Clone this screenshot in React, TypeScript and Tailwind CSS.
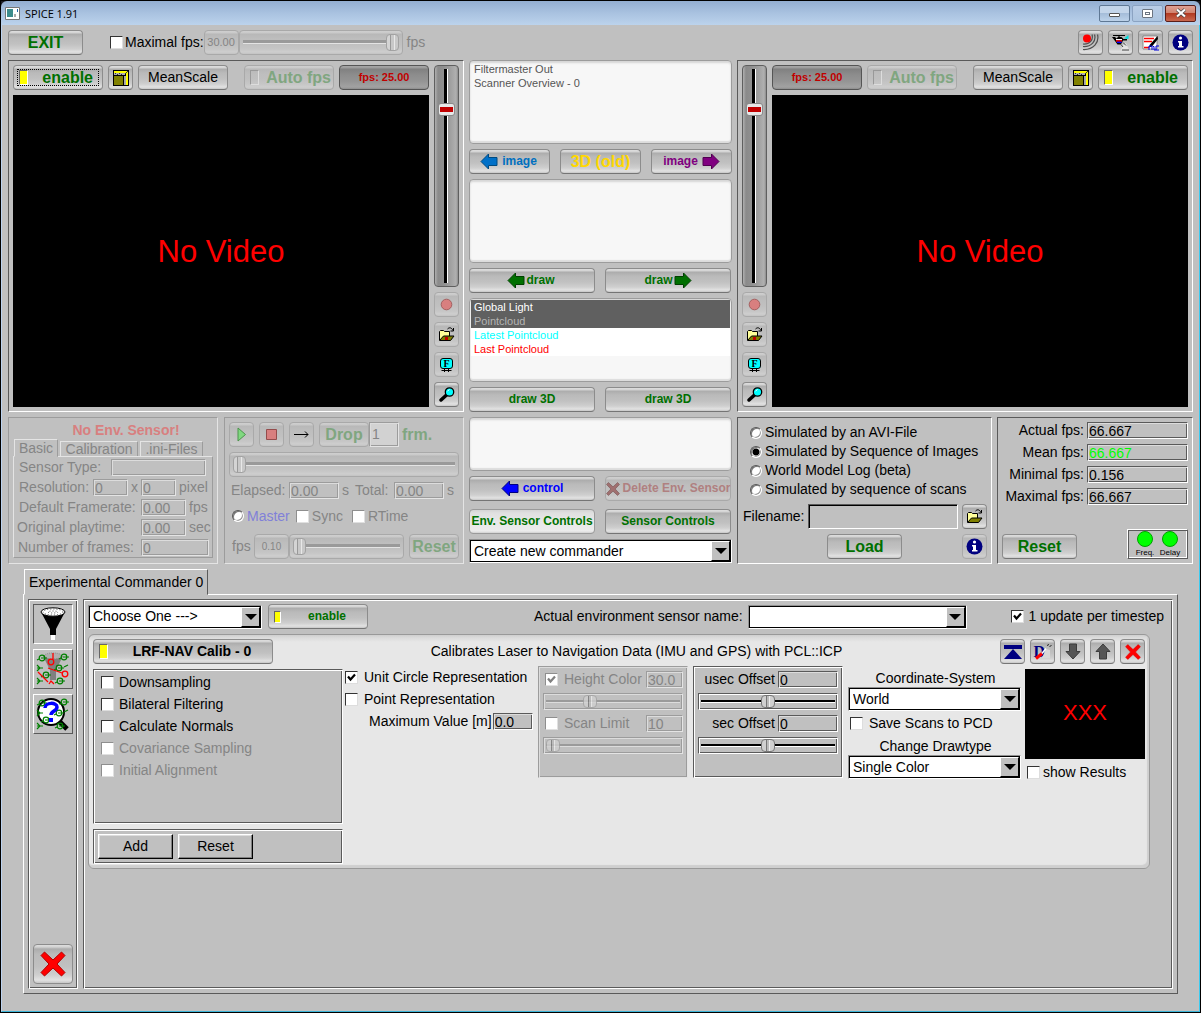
import React from "react";

const BTN =
  "flex items-center justify-center shrink-0 h-[25px] whitespace-nowrap rounded-[4px] border border-[#8c8c8c] border-b-[#757575] bg-[linear-gradient(180deg,#dedede_0px,#d2d2d2_2px,#acacac_3px,#bababa_7px,#c1c1c1_13px,#cfcfcf_18px,#e2e2e2_21px,#c6c6c6_100%)]";
const BTN_OFF =
  "flex items-center justify-center shrink-0 h-[25px] whitespace-nowrap rounded-[4px] border border-[#a9a9a9] bg-[linear-gradient(180deg,#cfcfcf_0px,#c9c9c9_2px,#b8b8b8_3px,#bebebe_8px,#c0c0c0_13px,#c6c6c6_18px,#cecece_21px,#c2c2c2_100%)]";
const BTN_DARK =
  "flex items-center justify-center shrink-0 h-[25px] rounded-[4px] border border-[#555] bg-[linear-gradient(180deg,#a6a6a6_0px,#9a9a9a_2px,#808080_3px,#8d8d8d_9px,#949494_15px,#a2a2a2_21px,#8c8c8c_100%)]";
const BTN_LIGHT =
  "flex items-center justify-center shrink-0 h-[25px] whitespace-nowrap rounded-[4px] border border-[#9a9a9a] bg-[linear-gradient(180deg,#d4d4d4_0px,#e0e0e0_3px,#e8e8e8_12px,#ececec_21px,#d0d0d0_100%)]";
const LIST =
  "rounded-[4px] border border-[#9c9c9c] bg-[#f7f7f7] shadow-[inset_0_2px_2px_#d6d6d6,inset_0_-2px_1px_#dcdcdc] pt-px px-px text-[11px] leading-[14px] text-[#555]";
const SUNK = "border border-t-[#5a5a5a] border-l-[#5a5a5a] border-b-white border-r-white";
const SUNK_OFF = "border border-t-[#9c9c9c] border-l-[#9c9c9c] border-b-[#e4e4e4] border-r-[#e4e4e4]";
const ENGRAVED =
  "border border-t-[#5a5a5a] border-l-[#5a5a5a] border-b-white border-r-white shadow-[inset_1px_1px_0_#fff,inset_-1px_-1px_0_#5a5a5a]";
const ENGRAVED_OFF =
  "border border-t-[#9c9c9c] border-l-[#9c9c9c] border-b-[#e4e4e4] border-r-[#e4e4e4] shadow-[inset_1px_1px_0_#dcdcdc,inset_-1px_-1px_0_#9c9c9c]";
const FIELD = "border border-t-[#5a5a5a] border-l-[#5a5a5a] border-b-white border-r-white shadow-[inset_1px_1px_0_#dcdcdc,inset_-1px_-1px_0_#5a5a5a]";

type Kids = { children?: React.ReactNode };

function Field({ id, value, w, off, green }: { id: string; value: string; w: string; off?: boolean; green?: boolean }) {
  return (
    <input
      id={id}
      aria-label={id}
      readOnly
      defaultValue={value}
      className={`h-[17px] min-w-0 bg-[#c0c0c0] pt-px pl-px text-[14px] leading-[14px] outline-none ${w} ${
        off ? ENGRAVED_OFF + " text-[#858585]" : FIELD
      } ${green ? "text-[#00ff00]" : ""}`}
    />
  );
}

function Check({ label, on, off, gap }: { label: string; on?: boolean; off?: boolean; gap?: string }) {
  return (
    <label className={`flex items-center whitespace-nowrap ${gap ?? "gap-[5px]"} ${off ? "text-[#858585]" : ""}`}>
      <span className="relative block size-[13px] shrink-0">
        <input
          type="checkbox"
          defaultChecked={on}
          disabled={off}
          className={`block size-[13px] appearance-none border bg-white ${
            off
              ? "border-t-[#8e8e8e] border-l-[#8e8e8e] border-b-[#e0e0e0] border-r-[#e0e0e0]"
              : "border-t-[#333] border-l-[#333] border-b-[#ddd] border-r-[#ddd]"
          }`}
        />
        {on && (
          <svg viewBox="0 0 13 13" className="pointer-events-none absolute inset-0 size-[13px]">
            <path d="M3 5.500L5.500 8.500L10 3.500" fill="none" stroke={off ? "#808080" : "#000"} strokeWidth="2.200" />
          </svg>
        )}
      </span>
      <span>{label}</span>
    </label>
  );
}

function Radio({ label, name, on, color }: { label: string; name: string; on?: boolean; color?: string }) {
  return (
    <label className={`flex h-[19px] items-center gap-[3px] whitespace-nowrap ${color ?? ""}`}>
      <input
        type="radio"
        name={name}
        defaultChecked={on}
        className="size-[12px] shrink-0 appearance-none rounded-full border border-t-[#555] border-l-[#555] border-b-white border-r-white bg-white shadow-[inset_1px_1px_0_#777,inset_-1px_-1px_0_#999] checked:bg-[radial-gradient(circle,#000_0_3px,#fff_4px)]"
      />
      <span>{label}</span>
    </label>
  );
}

function Combo({ label, options, w }: { label: string; options: string[]; w: string }) {
  return (
    <div className={`relative h-[24px] shrink-0 ${w}`}>
      <select
        aria-label={label}
        className="block h-full w-full appearance-none border border-t-[#909090] border-l-[#909090] border-b-white border-r-white bg-white pb-px pl-1 text-[14px] leading-[20px] shadow-[inset_0_0_0_1px_#000] outline-none"
      >
        {options.map((o) => (
          <option key={o}>{o}</option>
        ))}
      </select>
      <span className="pointer-events-none absolute top-[2px] right-[2px] bottom-[2px] flex w-[19px] items-center justify-center border border-t-white border-l-white border-b-black border-r-black bg-[#c0c0c0]">
        <svg width="12" height="6" viewBox="0 0 12 6">
          <path d="M0 0h12L6 6z" />
        </svg>
      </span>
    </div>
  );
}

function PlasticSlider({ label, value, w }: { label: string; value: number; w: string }) {
  return (
    <div className={`${BTN_OFF} min-w-0 px-[3px] ${w}`}>
      <input
        type="range"
        aria-label={label}
        defaultValue={value}
        className="h-[17px] w-full min-w-0 appearance-none bg-[linear-gradient(180deg,transparent_6px,#9a9a9a_6px_9px,#e4e4e4_9px_10px,transparent_10px)] [&::-webkit-slider-thumb]:h-[17px] [&::-webkit-slider-thumb]:w-[13px] [&::-webkit-slider-thumb]:appearance-none [&::-webkit-slider-thumb]:rounded-[4px] [&::-webkit-slider-thumb]:border [&::-webkit-slider-thumb]:border-[#a2a2a2] [&::-webkit-slider-thumb]:bg-[linear-gradient(90deg,#d4d4d4_3px,#999_3px_4px,#c8c8c8_4px_7px,#e8e8e8_7px_8px,#c8c8c8_8px)]"
      />
    </div>
  );
}

function ThinSlider({ label, value, off }: { label: string; value: number; off?: boolean }) {
  return (
    <div className={`flex h-[17px] items-center px-[2px] ${off ? ENGRAVED_OFF : ENGRAVED}`}>
      <input
        type="range"
        aria-label={label}
        defaultValue={value}
        className={`h-[13px] w-full min-w-0 appearance-none [&::-webkit-slider-thumb]:h-[13px] [&::-webkit-slider-thumb]:w-[14px] [&::-webkit-slider-thumb]:appearance-none [&::-webkit-slider-thumb]:rounded-[4px] [&::-webkit-slider-thumb]:border [&::-webkit-slider-thumb]:bg-[linear-gradient(90deg,#d0d0d0_4px,#777_4px_5px,#bbb_5px_7px,#eee_7px_8px,#d0d0d0_8px)] ${
          off
            ? "bg-[linear-gradient(180deg,transparent_5px,#9a9a9a_5px_7px,#dcdcdc_7px_8px,transparent_8px)] [&::-webkit-slider-thumb]:border-[#a2a2a2] [&::-webkit-slider-thumb]:opacity-80"
            : "bg-[linear-gradient(180deg,transparent_5px,#000_5px_7px,#fff_7px_8px,transparent_8px)] [&::-webkit-slider-thumb]:border-[#777]"
        }`}
      />
    </div>
  );
}

function TallSlider({ label }: { label: string }) {
  return (
    <div className="flex h-[222px] w-[25px] shrink-0 justify-center rounded-[4px] border border-[#5f5f5f] bg-[linear-gradient(90deg,#b0b0b0_0px,#8a8a8a_3px,#909090_9px,#a4a4a4_17px,#b0b0b0_21px,#8c8c8c_100%)] py-[3px]">
      <input
        type="range"
        aria-label={label}
        defaultValue={17}
        className="h-full w-[17px] appearance-none bg-[linear-gradient(90deg,transparent_6px,#000_6px_9px,#fff_9px_10px,transparent_10px)] [writing-mode:vertical-lr] [&::-webkit-slider-thumb]:h-[13px] [&::-webkit-slider-thumb]:w-[17px] [&::-webkit-slider-thumb]:appearance-none [&::-webkit-slider-thumb]:rounded-[3px] [&::-webkit-slider-thumb]:border [&::-webkit-slider-thumb]:border-[#8a8a8a] [&::-webkit-slider-thumb]:bg-[linear-gradient(90deg,#e8e8e8_1px,transparent_1px_14px,#e8e8e8_14px),linear-gradient(180deg,#e8e8e8_3px,#c00000_3px_8px,#e8e8e8_8px)]"
      />
    </div>
  );
}

function Led({ off }: { off?: boolean }) {
  return (
    <span
      className={`h-[15px] w-[9px] shrink-0 border ${
        off ? "border-t-[#999] border-l-[#999] border-b-[#ddd] border-r-[#ddd]" : "border-t-[#666] border-l-[#666] border-b-white border-r-white bg-[#ffff00]"
      }`}
    />
  );
}

function Arrow({ dir, fill, stroke }: { dir: "left" | "right"; fill: string; stroke: string }) {
  return (
    <svg width="18" height="17" viewBox="0 0 18 17" className="shrink-0">
      <path
        d={dir === "left" ? "M1 8.500L8.500 1v3.500h8.500v8H8.500V16z" : "M17 8.500L9.500 1v3.500H1v8h8.500V16z"}
        fill={fill}
        stroke={stroke}
      />
    </svg>
  );
}

function Cross({ size, fill, stroke }: { size: number; fill: string; stroke: string }) {
  return (
    <svg width={size} height={size} viewBox="0 0 26 26" className="shrink-0">
      <path d="M1 4.500L4.500 1 13 9l8.500-8L25 4.500 17 13l8 8.500-3.500 3.500-8.500-8-8.500 8L1 21.500 9 13z" fill={fill} stroke={stroke} strokeWidth="1" />
    </svg>
  );
}

function CubeIcon() {
  return (
    <svg width="16" height="16" viewBox="0 0 16 16" shapeRendering="crispEdges">
      <path d="M0 0h16v16H0z" fill="#000" />
      <path d="M1 1h13v2H1z" fill="#ffff00" />
      <path d="M13 2h2v13h-2z" fill="#ffff00" />
      <path d="M1 3h11v2H1z" fill="#b0b0b0" />
      <path d="M2 3h1v1H2zM4 4h1v1H4zM6 3h1v1H6zM8 4h1v1H8zM12 3h1v1h-1zM13 2h1v1h-1zM14 1h1v1h-1z" fill="#333" />
      <path d="M11 6h2v9h-2z" fill="#a8a8a8" />
      <path d="M10 6h1v9h-1z" fill="#000" />
      <path d="M1 6h9v9H1z" fill="#808000" />
    </svg>
  );
}

function FolderIcon({ dot }: { dot?: boolean }) {
  return (
    <svg width="17" height="15" viewBox="0 0 17 15">
      <path d="M1.500 13V4.500l1-1h3l1 1h5v5" fill="#ffff99" stroke="#000" />
      <path d="M1.500 13.500l4-4.500h10.500l-3.500 4.500z" fill="#808000" stroke="#000" />
      <path d="M9.500 2c2-2 4-1.500 5.500 1.500M15.500 1v3h-3" fill="none" stroke="#000" />
      {dot && <path d="M7 10h3v3H7z" fill="#c00000" />}
    </svg>
  );
}

function ScreenIcon() {
  return (
    <svg width="13" height="14" viewBox="0 0 13 14">
      <rect x="0.500" y="0.500" width="12" height="10" rx="2.500" fill="#00ffff" stroke="#000" />
      <text x="6.500" y="9" textAnchor="middle" fontFamily="Liberation Serif" fontWeight="bold" fontSize="10">
        F
      </text>
      <path d="M1.500 12.500h10M4.500 11v3M8.500 11v3" stroke="#000" />
    </svg>
  );
}

function LensIcon() {
  return (
    <svg width="16" height="15" viewBox="0 0 16 15">
      <path d="M2 13L7.500 8" stroke="#000" strokeWidth="3.500" strokeLinecap="round" />
      <circle cx="10.500" cy="5" r="4.200" fill="#00ffff" stroke="#000" strokeWidth="1.300" />
      <path d="M8.500 4l2-1.500" stroke="#fff" />
    </svg>
  );
}

function InfoIcon() {
  return (
    <svg width="17" height="17" viewBox="0 0 17 17">
      <circle cx="8.500" cy="8.500" r="8" fill="#000080" />
      <circle cx="8.500" cy="4" r="1.600" fill="#fff" />
      <path d="M6 7h4v5h1.500v1.500H6V12h1V8.500H6z" fill="#fff" />
    </svg>
  );
}

function RadarIcon() {
  return (
    <svg width="17" height="17" viewBox="0 0 17 17">
      <path d="M10 0.500c1.500 5-2 10-9 9.500M12.500 0.500c2 6.500-3 12.500-11.500 12M15.500 0.500c2 8-4 15.500-14.500 15" fill="none" stroke="#505050" strokeWidth="1.200" />
      <circle cx="5" cy="4.500" r="4" fill="#ff0000" />
    </svg>
  );
}

function HeliIcon() {
  return (
    <svg width="17" height="17" viewBox="0 0 17 17">
      <path d="M11 11l3-2 3 7H9z" fill="#e4e4e4" />
      <path d="M1 1.500h12M7 1.500V4" stroke="#000" strokeWidth="1.200" />
      <path d="M0 3h3l1.500 1.500L6 3h3.500l2 2H15v1.500h-4L9 10.500H5.500L3 7z" fill="#000" />
      <path d="M4 5h6v1.200H4z" fill="#fff" />
      <path d="M4 6.200h6v1.500H4z" fill="#ff0000" />
      <path d="M5 7.700h4.500v1.300H5z" fill="#0000ff" />
      <path d="M12 4.500l4.500-3.500v4z" fill="#00e0e0" />
      <path d="M9 10.500l2 2.500M11 8.500l3 3M10 16h7" stroke="#444" />
    </svg>
  );
}

function NoteIcon() {
  return (
    <svg width="17" height="16" viewBox="0 0 17 16">
      <path d="M1 1h14v13H1z" fill="#fff" stroke="#777" strokeWidth="0.800" />
      <path d="M2 3.500h10M2 6.500h8M2 12.500h5" stroke="#ff0000" strokeWidth="1.400" />
      <path d="M15.500 1L8 9.500l-1 3 3-1L16 4z" fill="#000" />
      <path d="M7 15v-4h3v4M11 11.500h1v3.500h2v-4h3M14 15h3" fill="none" stroke="#0000e0" />
    </svg>
  );
}

function DebugIcon() {
  return (
    <span className="relative flex h-[19px] w-[18px] items-center pb-px font-['Liberation_Serif',serif] text-[16px] leading-[19px] font-bold text-[#000080]">
      D
      <svg width="18" height="17" viewBox="0 0 18 17" className="absolute top-px left-0">
        <path d="M12 6l4 1v8h-8z" fill="#d8d8d8" />
        <path d="M2 15.500l6-5" stroke="#ff0000" strokeWidth="3" />
        <path d="M8 10.500l4-5" stroke="#fff" strokeWidth="1.500" />
        <path d="M13.500 3l1-2M15.500 4l2-2" stroke="#222" />
      </svg>
    </span>
  );
}

function TopIcon() {
  return (
    <svg width="18" height="14" viewBox="0 0 18 14">
      <path d="M0 0h18v4H0zM9 4L18 14H0z" fill="#000080" />
    </svg>
  );
}

function BlockArrow({ up }: { up?: boolean }) {
  return (
    <svg width="16" height="17" viewBox="0 0 16 17">
      <path d={up ? "M8 1l7 7.500h-3.500V16h-7V8.500H1z" : "M8 16L1 8.500h3.500V1h7v7.500H15z"} fill="#555" stroke="#3c3c3c" />
    </svg>
  );
}

function FunnelIcon() {
  return (
    <svg width="26" height="34" viewBox="0 0 26 34">
      <path d="M1 5l9 17v6h6v-6l9-17z" fill="#000" />
      <ellipse cx="13" cy="5" rx="12" ry="4.200" fill="#fff" stroke="#000" />
      <ellipse cx="13" cy="5" rx="10" ry="3" fill="none" stroke="#555" strokeDasharray="1 2" />
      <ellipse cx="13" cy="5" rx="5" ry="1" fill="none" stroke="#555" strokeDasharray="1 2" />
      <path d="M11 28h4v5h-4z" fill="#fff" />
    </svg>
  );
}

const nodes: [number, number][] = [[6, 6], [28, 5], [23, 16], [10, 23], [24, 29]];

function Circuit() {
  return (
    <g fill="none" stroke="#008000" strokeWidth="1.200">
      {nodes.map(([x, y]) => (
        <g key={`${x}-${y}`}>
          <circle cx={x} cy={y} r="2.800" />
          <path d={`M${x - 1} ${y}h6M${x - 5} ${y + 2}l2-1`} />
        </g>
      ))}
      <path d="M1 13l3 3-3 3M1 16h6M1 26l3 3-3 3M1 29h6M28 15l4-2" />
    </g>
  );
}

function GraphIcon() {
  return (
    <svg width="34" height="34" viewBox="0 0 34 34">
      <path d="M7 4h20l-7 14v10h-6V18z" fill="#808080" />
      <ellipse cx="17" cy="4" rx="9" ry="3" fill="#b0b0b0" stroke="#888" strokeDasharray="1 1" />
      <Circuit />
      <g fill="none" stroke="#ff0000" strokeWidth="1.300">
        <circle cx="15" cy="10" r="2.800" />
        <circle cx="29" cy="22" r="2.800" />
        <path d="M17 1v6M12 16l14 5M2 20l10 10M13 32l2-3 3 3" />
      </g>
    </svg>
  );
}

function QueryIcon() {
  return (
    <svg width="34" height="34" viewBox="0 0 34 34">
      <path d="M22 23l9 9" stroke="#000" strokeWidth="5" />
      <circle cx="15" cy="15" r="13" fill="#fff" stroke="#000" strokeWidth="2" />
      <Circuit />
      <path d="M9 11c0-6 12-6 12-1 0 4-6 4-6 8" fill="none" stroke="#0000ff" strokeWidth="3.500" />
      <path d="M13 21h4v4h-4z" fill="#0000ff" />
    </svg>
  );
}

function IconButton({ label, off, children }: Kids & { label: string; off?: boolean }) {
  return (
    <button aria-label={label} className={`${off ? BTN_OFF : BTN} w-[25px]`}>
      {children}
    </button>
  );
}

function VideoPanel({ side }: { side: "left" | "right" }) {
  const enable = (
    <button key="en" className={`${BTN} w-[90px] pr-[9px] pl-[5px] text-[16px] font-bold text-[#007000]`}>
      <Led />
      <span className="flex-1 text-right">enable</span>
    </button>
  );
  const focused = (
    <button key="en" className={`${BTN} w-[90px] p-[3px] text-[16px] font-bold text-[#007000]`}>
      <span className="flex h-[17px] w-full items-center justify-between border border-dotted border-black pr-[5px] pl-px">
        <Led />
        enable
      </span>
    </button>
  );
  const cube = (
    <IconButton key="cube" label="Bounding box">
      <CubeIcon />
    </IconButton>
  );
  const mean = (
    <button key="mean" className={`${BTN} w-[90px] text-[14px]`}>
      MeanScale
    </button>
  );
  const auto = (
    <button key="auto" className={`${BTN_OFF} w-[90px] pr-[2px] pl-[5px] text-[16px] font-bold text-[#80a680]`}>
      <Led off />
      <span className="flex-1 text-right">Auto fps</span>
    </button>
  );
  const fps = (
    <output key="fps" className={`${BTN_DARK} w-[90px] text-[11px] font-bold text-[#c00000]`}>
      fps: 25.00
    </output>
  );
  const gap = <span key="gap" className="flex-1" />;
  const video = (
    <div key="v" className="flex min-w-0 flex-1 flex-col gap-[5px]">
      <div className="flex gap-[5px]">
        {side === "left" ? [focused, cube, mean, gap, auto, fps] : [fps, auto, gap, mean, cube, enable]}
      </div>
      <div className="flex flex-1 items-center justify-center bg-black text-[31px] text-[#ff0000]">No Video</div>
    </div>
  );
  const tools = (
    <div key="t" className="flex flex-col gap-[5px]">
      <TallSlider label={`${side} scale`} />
      <IconButton label="Record" off>
        <svg width="13" height="13" viewBox="0 0 13 13">
          <circle cx="6.500" cy="6.500" r="5.300" fill="#d87f7f" stroke="#a46060" />
        </svg>
      </IconButton>
      <IconButton label="Open" off>
        <FolderIcon dot />
      </IconButton>
      <IconButton label="Fullscreen" off>
        <ScreenIcon />
      </IconButton>
      <IconButton label="Zoom">
        <LensIcon />
      </IconButton>
    </div>
  );
  return <section className={`flex gap-[5px] p-1 ${SUNK}`}>{side === "left" ? [video, tools] : [tools, video]}</section>;
}

function EnvSensor() {
  return (
    <section className={`w-[210px] shrink-0 px-1 pt-[3px] text-[#858585] ${SUNK_OFF}`}>
      <h2 className="pl-[26px] text-center text-[14px] leading-[18px] font-bold text-[#d87f7f]">No Env. Sensor!</h2>
      <div className="flex items-end gap-[2px] pl-px" role="tablist">
        <button role="tab" className="relative -mb-px h-[18px] w-[44px] border border-t-[#e4e4e4] border-r-[#9c9c9c] border-b-[#c0c0c0] border-l-[#e4e4e4] bg-[#c0c0c0] leading-[16px]">
          Basic
        </button>
        <button role="tab" className="h-[15px] w-[78px] border border-t-[#e4e4e4] border-r-[#9c9c9c] border-b-0 border-l-[#e4e4e4] leading-[15px]">
          Calibration
        </button>
        <button role="tab" className="h-[15px] w-[63px] border border-t-[#e4e4e4] border-r-[#9c9c9c] border-b-0 border-l-[#e4e4e4] leading-[15px]">
          .ini-Files
        </button>
      </div>
      <div className="border border-t-[#e4e4e4] border-l-[#e4e4e4] border-b-[#9c9c9c] border-r-[#9c9c9c] pl-[5px] whitespace-nowrap">
        <div className="flex h-5 items-center gap-[3px]">
          <span className="w-[89px]">Sensor Type:</span>
          <Field id="Sensor Type" value="" w="w-[95px]" off />
        </div>
        <div className="flex h-5 items-center gap-[3px]">
          <span className="w-[71px]">Resolution:</span>
          <Field id="Resolution width" value="0" w="w-[35px]" off />
          x
          <Field id="Resolution height" value="0" w="w-[35px]" off />
          pixel
        </div>
        <div className="flex h-5 items-center gap-[3px]">
          <span className="w-[119px]">Default Framerate:</span>
          <Field id="Default Framerate" value="0.00" w="w-[45px]" off />
          fps
        </div>
        <div className="-ml-[2px] flex h-5 items-center gap-[3px]">
          <span className="w-[121px]">Original playtime:</span>
          <Field id="Original playtime" value="0.00" w="w-[45px]" off />
          sec
        </div>
        <div className="-ml-px flex h-5 items-center gap-[3px]">
          <span className="w-[120px]">Number of frames:</span>
          <Field id="Number of frames" value="0" w="w-[68px]" off />
        </div>
      </div>
    </section>
  );
}

function Playback() {
  return (
    <section className={`flex min-w-0 flex-1 flex-col p-1 whitespace-nowrap text-[#858585] ${SUNK_OFF}`}>
      <div className="flex items-center">
        <div className="mr-[5px] flex gap-[5px]">
          <IconButton label="Play" off>
            <svg width="10" height="15" viewBox="0 0 10 15">
              <path d="M1 1l7.500 6.500L1 14z" fill="#80d880" stroke="#4c944c" />
            </svg>
          </IconButton>
          <IconButton label="Stop" off>
            <svg width="11" height="11" viewBox="0 0 11 11">
              <path d="M0.500 0.500h10v10h-10z" fill="#d87f7f" stroke="#944c4c" />
            </svg>
          </IconButton>
          <IconButton label="Step" off>
            <svg width="15" height="7" viewBox="0 0 15 7">
              <path d="M0 3.500h14M11 0.500l3 3-3 3" fill="none" stroke="#000" />
            </svg>
          </IconButton>
        </div>
        <button className={`${BTN_OFF} w-[50px] text-[16px] font-bold text-[#80a680]`}>Drop</button>
        <input aria-label="Drop frames" readOnly defaultValue="1" className={`h-[25px] w-[30px] bg-[#d2d2d2] pb-[2px] pl-[2px] ${ENGRAVED_OFF}`} />
        <span className="ml-[3px] text-[16px] font-bold text-[#80a680]">frm.</span>
      </div>
      <div className="mt-[5px] flex">
        <PlasticSlider label="Position" value={0} w="w-full" />
      </div>
      <div className="mt-[5px] flex h-[17px] items-center gap-[3px] pl-[2px]">
        <span className="w-[55px]">Elapsed:</span>
        <Field id="Elapsed" value="0.00" w="w-[50px]" off />
        <span className="w-[10px]">s</span>
        <span className="w-[36px]">Total:</span>
        <Field id="Total" value="0.00" w="w-[50px]" off />s
      </div>
      <div className="mt-[7px] flex h-5 items-center gap-[6px] pl-[3px]">
        <Radio name="clock" label="Master" color="text-[#8080d8]" />
        <div className="mr-[3px]">
          <Check label="Sync" off gap="gap-[3px]" />
        </div>
        <Check label="RTime" off gap="gap-[3px]" />
      </div>
      <div className="mt-2 flex items-center">
        <span className="w-[25px] pl-[3px]">fps</span>
        <output className={`${BTN_OFF} w-[35px] text-[10px]`}>0.10</output>
        <PlasticSlider label="Playback rate" value={0} w="flex-1 !shrink" />
        <button className={`${BTN_OFF} ml-[5px] w-[50px] text-[16px] font-bold text-[#80a680]`}>Reset</button>
      </div>
    </section>
  );
}

function CenterColumn() {
  const wide = `${BTN} text-[12px] font-bold text-[#007000]`;
  return (
    <section className="flex w-[263px] shrink-0 flex-col gap-[5px]">
      <ul className={`h-[84px] ${LIST}`}>
        <li className="px-[3px]">Filtermaster Out</li>
        <li className="px-[3px]">Scanner Overview - 0</li>
      </ul>
      <div className="grid grid-cols-3 gap-[10px]">
        <button className={`${BTN} gap-1 pr-[2px] text-[12px] font-bold text-[#0070c0]`}>
          <Arrow dir="left" fill="#0070c8" stroke="#004a80" />
          image
        </button>
        <button className={`${BTN} text-[16px] font-bold text-[#ffd700]`}>3D (old)</button>
        <button className={`${BTN} gap-1 text-[12px] font-bold text-[#800080]`}>
          image
          <Arrow dir="right" fill="#800080" stroke="#500050" />
        </button>
      </div>
      <ul className={`h-[84px] ${LIST}`} />
      <div className="grid grid-cols-2 gap-[10px] pr-px">
        <button className={`${wide} gap-px pr-[2px]`}>
          <Arrow dir="left" fill="#007000" stroke="#004000" />
          draw
        </button>
        <button className={`${wide} gap-px`}>
          draw
          <Arrow dir="right" fill="#007000" stroke="#004000" />
        </button>
      </div>
      <ul className={`h-[84px] ${LIST}`}>
        <li className="bg-[#606060] px-[3px] text-white">Global Light</li>
        <li className="bg-[#606060] px-[3px] text-[#b4b4b4]">Pointcloud</li>
        <li className="bg-white px-[3px] text-[#00ffff]">Latest Pointcloud</li>
        <li className="bg-white px-[3px] text-[#ff0000]">Last Pointcloud</li>
      </ul>
      <div className="grid grid-cols-2 gap-[10px] pr-px">
        <button className={wide}>draw 3D</button>
        <button className={wide}>draw 3D</button>
      </div>
      <ul className={`h-[54px] ${LIST}`} />
      <div className="grid grid-cols-2 gap-[10px] pr-px">
        <button className={`${BTN} gap-1 text-[12px] font-bold text-[#0000ff]`}>
          <Arrow dir="left" fill="#0000ff" stroke="#000080" />
          control
        </button>
        <button className={`${BTN_OFF} gap-[3px] text-[12px] font-bold text-[#b08080]`}>
          <Cross size={14} fill="#a07070" stroke="#704c4c" />
          Delete Env. Sensor
        </button>
      </div>
      <div className="mt-[3px] grid grid-cols-2 gap-[10px] pr-px">
        <button className={`${BTN_LIGHT} text-[12px] font-bold text-[#007000]`}>Env. Sensor Controls</button>
        <button className={wide}>Sensor Controls</button>
      </div>
      <Combo label="Commander" options={["Create new commander"]} w="w-full" />
    </section>
  );
}

function Simulation() {
  return (
    <section className={`flex min-w-0 flex-1 flex-col p-1 whitespace-nowrap ${SUNK}`}>
      <div className="pt-px pl-[8px]">
        <Radio name="sim" label="Simulated by an AVI-File" />
        <Radio name="sim" label="Simulated by Sequence of Images" on />
        <Radio name="sim" label="World Model Log (beta)" />
        <Radio name="sim" label="Simulated by sequence of scans" />
      </div>
      <div className="mt-[5px] flex items-center gap-1 pl-px">
        <label htmlFor="filename">Filename:</label>
        <input
          id="filename"
          className="h-[25px] min-w-0 flex-1 border border-t-[#5a5a5a] border-l-[#5a5a5a] border-b-white border-r-white bg-[#c0c0c0] px-1 shadow-[inset_1px_1px_0_#000]"
        />
        <IconButton label="Browse">
          <FolderIcon />
        </IconButton>
      </div>
      <div className="mt-[5px] flex justify-between pl-[85px]">
        <button className={`${BTN} w-[75px] text-[16px] font-bold text-[#007000]`}>Load</button>
        <IconButton label="About file" off>
          <InfoIcon />
        </IconButton>
      </div>
    </section>
  );
}

function Stats() {
  const rows = [
    ["Actual fps:", "66.667"],
    ["Mean fps:", "66.667"],
    ["Minimal fps:", "0.156"],
    ["Maximal fps:", "66.667"],
  ];
  return (
    <section className={`flex w-[196px] shrink-0 flex-col justify-between p-1 whitespace-nowrap ${SUNK}`}>
      <div className="flex flex-col gap-[5px]">
        {rows.map(([k, v]) => (
          <div key={k} className="flex h-[17px] items-center justify-end gap-[3px]">
            <label htmlFor={k}>{k}</label>
            <Field id={k} value={v} w="w-[101px]" green={k === "Mean fps:"} />
          </div>
        ))}
      </div>
      <div className="flex items-end justify-between">
        <button className={`${BTN} w-[75px] text-[16px] font-bold text-[#007000]`}>Reset</button>
        <div className="flex gap-[5px] border border-t-white border-l-white border-b-[#5a5a5a] border-r-[#5a5a5a] px-[7px] pt-px text-[8px] leading-[9px] shadow-[inset_1px_1px_0_#5a5a5a,inset_-1px_-1px_0_#fff]">
          {["Freq.", "Delay"].map((t) => (
            <div key={t} className="flex h-[27px] w-5 flex-col items-center gap-px">
              <span className="size-[16px] shrink-0 rounded-full border border-[#00a000] bg-[#00ff00]" />
              {t}
            </div>
          ))}
        </div>
      </div>
    </section>
  );
}

function CalibCard() {
  return (
    <article className="mt-[5px] mr-[18px] rounded-[6px] border border-[#999] bg-[linear-gradient(180deg,#cfcfcf_0px,#dcdcdc_3px,#e7e7e7_7px,#e7e7e7_100%)] p-1 shadow-[inset_-2px_-3px_1px_#cfcfcf]">
      <header className="flex items-center gap-[5px]">
        <button className={`${BTN} w-[180px] pr-[15px] pl-[5px] text-[14px] font-bold`}>
          <Led />
          <span className="flex-1 pl-[19px]">LRF-NAV Calib - 0</span>
        </button>
        <p className="flex-1 text-center">Calibrates Laser to Navigation Data (IMU and GPS) with PCL::ICP</p>
        <IconButton label="To top">
          <TopIcon />
        </IconButton>
        <IconButton label="Draw settings">
          <DebugIcon />
        </IconButton>
        <IconButton label="Move down">
          <BlockArrow />
        </IconButton>
        <IconButton label="Move up">
          <BlockArrow up />
        </IconButton>
        <IconButton label="Remove">
          <Cross size={16} fill="#ff0000" stroke="#e00000" />
        </IconButton>
      </header>
      <div className="mt-[2px] flex items-start whitespace-nowrap">
        <div className="mt-[3px] flex w-[250px] shrink-0 flex-col gap-[5px]">
          <div className={`flex h-[155px] flex-col bg-[#c0c0c0] pt-px pl-[7px] ${ENGRAVED}`}>
            {["Downsampling", "Bilateral Filtering", "Calculate Normals", "Covariance Sampling", "Initial Alignment"].map((t, i) => (
              <div key={t} className="flex h-[22px] items-center">
                <Check label={t} off={i > 2} />
              </div>
            ))}
          </div>
          <div className={`flex gap-[5px] bg-[#c0c0c0] p-1 ${ENGRAVED}`}>
            {["Add", "Reset"].map((t) => (
              <button
                key={t}
                className="h-[25px] w-[75px] border border-t-white border-l-white border-b-black border-r-black shadow-[inset_-1px_-1px_0_#808080,inset_1px_1px_0_#dcdcdc]"
              >
                {t}
              </button>
            ))}
          </div>
        </div>
        <div className="ml-[2px] min-w-0 flex-1">
          <div className="flex h-[22px] items-center">
            <Check label="Unit Circle Representation" on gap="gap-[6px]" />
          </div>
          <div className="flex h-[22px] items-center">
            <Check label="Point Representation" gap="gap-[6px]" />
          </div>
          <div className="flex h-[22px] items-center gap-px pl-6">
            <label htmlFor="Maximum Value">Maximum Value [m]</label>
            <Field id="Maximum Value" value="0.0" w="w-[40px]" />
          </div>
        </div>
        <div className={`flex h-[112px] w-[150px] shrink-0 flex-col gap-[5px] bg-[#c0c0c0] p-1 ${ENGRAVED_OFF}`}>
          <div className="flex h-[17px] items-center justify-between pl-[2px]">
            <Check label="Height Color" on off gap="gap-[6px]" />
            <Field id="Height Color" value="30.0" w="w-[37px]" off />
          </div>
          <ThinSlider label="Height Color range" value={31} off />
          <div className="flex h-[17px] items-center justify-between pl-[2px]">
            <Check label="Scan Limit" off gap="gap-[6px]" />
            <Field id="Scan Limit" value="10" w="w-[37px]" off />
          </div>
          <ThinSlider label="Scan Limit range" value={0} off />
        </div>
        <div className={`ml-[5px] flex h-[112px] w-[150px] shrink-0 flex-col gap-[5px] bg-[#c0c0c0] p-1 ${ENGRAVED}`}>
          {["usec Offset", "sec Offset"].map((t) => (
            <React.Fragment key={t}>
              <div className="flex h-[17px] items-center justify-end gap-[3px]">
                <label htmlFor={t}>{t}</label>
                <Field id={t} value="0" w="w-[60px]" />
              </div>
              <ThinSlider label={`${t} range`} value={50} />
            </React.Fragment>
          ))}
        </div>
        <div className="ml-[5px] w-[173px] shrink-0">
          <div className="h-[21px] pt-px pl-[2px] text-center leading-[22px]">Coordinate-System</div>
          <Combo label="Coordinate-System" options={["World"]} w="w-full" />
          <div className="flex h-6 items-center pt-px pl-[2px]">
            <Check label="Save Scans to PCD" gap="gap-[6px]" />
          </div>
          <div className="h-5 pl-[2px] text-center leading-[22px]">Change Drawtype</div>
          <Combo label="Change Drawtype" options={["Single Color"]} w="w-full" />
        </div>
        <div className="mt-[3px] ml-1 w-[120px] shrink-0">
          <div className="flex h-[90px] items-center justify-center bg-black pb-[3px] text-[22px] text-[#ff0000]">XXX</div>
          <div className="mt-[3px] flex h-5 items-center pl-[2px]">
            <Check label="show Results" gap="gap-[3px]" />
          </div>
        </div>
      </div>
    </article>
  );
}

function Commander() {
  return (
    <section className="mx-[15px] mt-[5px] mb-[17px] flex flex-1 flex-col">
      <div role="tablist" className="flex pl-px">
        <button
          role="tab"
          className="relative -mb-px h-[26px] border border-t-white border-r-[#5a5a5a] border-b-[#c0c0c0] border-l-white bg-[#c0c0c0] px-1"
        >
          Experimental Commander 0
        </button>
      </div>
      <div className="flex flex-1 gap-[5px] border border-t-white border-l-white border-b-[#5a5a5a] border-r-[#5a5a5a] p-1">
        <nav className={`flex w-[50px] shrink-0 flex-col gap-[5px] p-1 ${ENGRAVED}`}>
          <button aria-label="Filters" className="flex size-10 items-center justify-center border border-t-[#5a5a5a] border-l-[#5a5a5a] border-b-white border-r-white">
            <FunnelIcon />
          </button>
          <button aria-label="Graph" className="flex size-10 items-center justify-center border border-t-white border-l-white border-b-[#5a5a5a] border-r-[#5a5a5a]">
            <GraphIcon />
          </button>
          <button aria-label="Inspect" className="flex size-10 items-center justify-center border border-t-white border-l-white border-b-[#5a5a5a] border-r-[#5a5a5a]">
            <QueryIcon />
          </button>
          <button
            aria-label="Close commander"
            className="mt-auto flex size-10 items-center justify-center rounded-[4px] border border-[#8c8c8c] bg-[linear-gradient(180deg,#dedede_0px,#d2d2d2_2px,#acacac_4px,#bababa_9px,#c1c1c1_22px,#cfcfcf_30px,#e2e2e2_35px,#c6c6c6_100%)]"
          >
            <Cross size={26} fill="#ff0000" stroke="#b00000" />
          </button>
        </nav>
        <div className={`min-w-0 flex-1 p-1 ${ENGRAVED}`}>
          <div className="flex items-center whitespace-nowrap">
            <Combo label="Filter" options={["Choose One --->"]} w="w-[174px]" />
            <button className={`${BTN} ml-[6px] w-[100px] pr-[21px] pl-[5px] text-[12px] font-bold text-[#007000]`}>
              <span className="h-[12px] w-[7px] border border-t-[#666] border-l-[#666] border-b-white border-r-white bg-[#ffff00]" />
              <span className="flex-1 text-right">enable</span>
            </button>
            <span className="mr-[5px] ml-auto">Actual environment sensor name:</span>
            <Combo label="Actual environment sensor name" options={[""]} w="w-[219px]" />
            <div className="mr-1 ml-[44px]">
              <Check label="1 update per timestep" on />
            </div>
          </div>
          <CalibCard />
        </div>
      </div>
    </section>
  );
}

function TitleBar() {
  const ctl = "flex h-[17px] w-[31px] items-center justify-center rounded-[2px] border";
  return (
    <header className="flex h-6 items-center rounded-t-[6px] bg-[linear-gradient(180deg,#93aed1,#a9c2e0_50%,#bcd3ec)] pr-1 pl-1">
      <svg width="15" height="13" viewBox="0 0 15 13">
        <path d="M0.500 0.500h14v12H0.500z" fill="#fff" stroke="#777" />
        <path d="M2 2h6v8H2z" fill="#3c8c8c" />
        <path d="M9 7h2v3H9z" fill="#aaa" />
        <path d="M12.500 2v3" stroke="#26a" />
      </svg>
      <h1 className="flex-1 pl-[5px] font-['Open_Sans',sans-serif] text-[11px] text-black">SPICE 1.91</h1>
      <div className="flex gap-[2px]">
        <button aria-label="Minimize" className={`${ctl} border-[#5f7894] bg-[linear-gradient(180deg,#c3d5ea_45%,#a5bdd9_50%,#bcd2ea)]`}>
          <span className="mt-1 h-[4px] w-[11px] rounded-[1px] border border-[#555] bg-white" />
        </button>
        <button aria-label="Maximize" className={`${ctl} border-[#8ba3c2] bg-[linear-gradient(180deg,#b9cde6,#adc5e0)]`}>
          <span className="flex h-[9px] w-[11px] items-center justify-center rounded-[1px] border border-[#6b7480] bg-white">
            <span className="h-[3px] w-[5px] border border-[#6b7480]" />
          </span>
        </button>
        <button aria-label="Close" className={`${ctl} border-[#5a1e1a] bg-[linear-gradient(180deg,#dfa195_0%,#d0836f_45%,#b23a22_50%,#c9684f)]`}>
          <svg width="12" height="10" viewBox="0 0 12 10">
            <path d="M2 1.500l8 7M10 1.500l-8 7" stroke="#444" strokeWidth="3.600" />
            <path d="M2 1.500l8 7M10 1.500l-8 7" stroke="#fff" strokeWidth="2.200" />
          </svg>
        </button>
      </div>
    </header>
  );
}

export default function App() {
  return (
    <div className="flex min-h-screen flex-col border border-black bg-[#1c1c24] font-['Liberation_Sans',Arial,sans-serif] text-[14px] leading-[17px] text-black">
      <TitleBar />
      <main className="flex flex-1 flex-col border-r border-b border-l border-r-[#3ccbf0] border-b-[#3cb4d8] border-l-[#bcd3f0] bg-[#c0c0c0] px-[6px] pt-[5px]">
        <div className="flex items-center text-[#858585]">
          <button className={`${BTN} w-[75px] text-[16px] font-bold text-[#007000]`}>EXIT</button>
          <div className="ml-[27px] text-black">
            <Check label="Maximal fps:" gap="gap-[2px]" />
          </div>
          <output className={`${BTN_OFF} w-[35px] text-[11px]`}>30.00</output>
          <PlasticSlider label="Maximal fps" value={100} w="w-[164px]" />
          <span className="ml-[4px]">fps</span>
          <div className="ml-auto flex gap-[5px]">
            <IconButton label="Radar">
              <RadarIcon />
            </IconButton>
            <IconButton label="Helicopter">
              <HeliIcon />
            </IconButton>
            <IconButton label="Notes">
              <NoteIcon />
            </IconButton>
            <IconButton label="About">
              <InfoIcon />
            </IconButton>
          </div>
        </div>
        <div className="mt-[5px] flex gap-[5px]">
          <div className="flex min-w-0 flex-1 flex-col gap-[5px]">
            <VideoPanel side="left" />
            <div className="flex flex-1 gap-[6px]">
              <EnvSensor />
              <Playback />
            </div>
          </div>
          <CenterColumn />
          <div className="flex min-w-0 flex-1 flex-col gap-[5px]">
            <VideoPanel side="right" />
            <div className="flex flex-1 gap-[5px]">
              <Simulation />
              <Stats />
            </div>
          </div>
        </div>
        <Commander />
      </main>
    </div>
  );
}
